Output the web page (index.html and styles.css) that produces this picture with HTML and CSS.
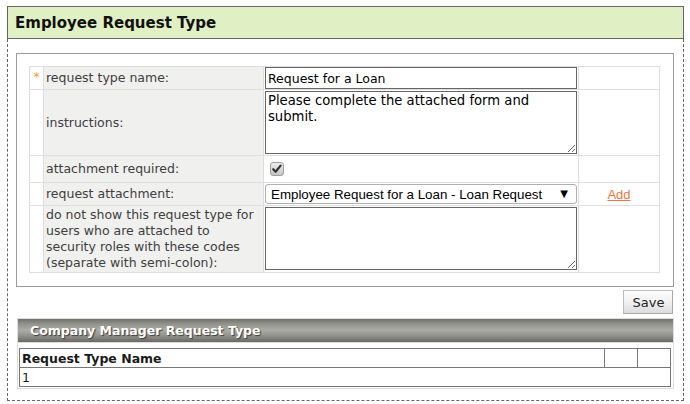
FILE: index.html
```html
<!DOCTYPE html>
<html>
<head>
<meta charset="utf-8">
<link rel="stylesheet" href="styles.css">
</head>
<body>
<div class="page">
  <div class="title">Employee Request Type</div>
  <div class="body">
    <div class="panel">
      <div class="form">
        <div class="c star">*</div>
        <div class="c lbl">request type name:</div>
        <div class="c fld"><input class="txt" type="text" value="Request for a Loan"></div>
        <div class="c"></div>

        <div class="c"></div>
        <div class="c lbl">instructions:</div>
        <div class="c fld"><textarea class="area">Please complete the attached form and submit.</textarea></div>
        <div class="c"></div>

        <div class="c"></div>
        <div class="c lbl">attachment required:</div>
        <div class="c fld mid">
          <svg class="chk" width="14" height="14" viewBox="0 0 14 14">
            <defs>
              <linearGradient id="cg" x1="0" y1="0" x2="0" y2="1">
                <stop offset="0" stop-color="#eeeeee"/>
                <stop offset="1" stop-color="#c4c4c4"/>
              </linearGradient>
            </defs>
            <rect x="0.5" y="0.5" width="13" height="13" rx="2.5" fill="url(#cg)" stroke="#a0a0a0"/>
            <path d="M3.2 7.2 L5.6 9.8 L10.6 3.6" fill="none" stroke="#333" stroke-width="2.2" stroke-linecap="round" stroke-linejoin="round"/>
          </svg>
        </div>
        <div class="c"></div>

        <div class="c"></div>
        <div class="c lbl">request attachment:</div>
        <div class="c fld"><div class="sel"><select class="selbox"><option>Employee Request for a Loan - Loan Request</option></select></div></div>
        <div class="c add"><a href="#" class="link">Add</a></div>

        <div class="c"></div>
        <div class="c lbl">do not show this request type for users who are attached to security roles with these codes (separate with semi-colon):</div>
        <div class="c fld"><textarea class="area area2"></textarea></div>
        <div class="c"></div>
      </div>
    </div>
    <div class="actions"><button class="btn" type="button">Save</button></div>
    <div class="sub">
      <div class="subbar">Company Manager Request Type</div>
      <div class="list">
        <div class="lh">Request Type Name</div>
        <div class="lh"></div>
        <div class="lh"></div>
        <div class="lr">1</div>
      </div>
    </div>
  </div>
</div>
</body>
</html>
```
FILE: styles.css
```css
html, body {
  margin: 0;
  padding: 0;
  background: #fff;
}
body {
  font-family: "DejaVu Sans", Verdana, sans-serif;
  font-size: 12.5px;
  color: #000;
}
.page {
  padding: 6px 6px 0 7px;
}
.title {
  height: 31px;
  border: 1px solid #666;
  background: #e0efc4;
  padding-left: 7px;
  display: flex;
  align-items: center;
  font-weight: bold;
  font-size: 15px;
  color: #111;
}
.body {
  border: 1px dashed #666;
  border-top: none;
  padding: 14px 9px 11px 8px;
}
.panel {
  border: 1px solid #9a9a9a;
  padding: 12px 13px 13px 12px;
}
.form {
  display: grid;
  grid-template-columns: 13px 219px 314px 80px;
  grid-template-rows: 22px 65px 26px 22px 66px;
  gap: 1px;
  padding: 1px;
  background: #dedede;
  width: 631px;
  box-sizing: border-box;
}
.c {
  background: #fff;
}
.star {
  color: #f39a2e;
  text-align: center;
  font-size: 12px;
  line-height: 12px;
  padding-top: 4px;
  box-sizing: border-box;
}
.lbl {
  background: #f0f0ee;
  color: #3e3e3e;
  padding: 0 2px;
  display: flex;
  align-items: center;
  line-height: 16px;
}
.fld {
  padding-left: 1px;
}
.mid {
  display: flex;
  align-items: center;
  padding-left: 6px;
}
.chk {
  display: block;
}
.txt {
  display: block;
  box-sizing: border-box;
  width: 312px;
  height: 22px;
  margin: 0;
  border: 1px solid #666;
  padding: 0 2px;
  font-family: "DejaVu Sans", Verdana, sans-serif;
  font-size: 12.5px;
  color: #000;
  outline: none;
}
.area {
  display: block;
  box-sizing: border-box;
  width: 312px;
  height: 63px;
  margin: 1px 0 0 0;
  border: 1px solid #666;
  padding: 1px 2px;
  font-family: "DejaVu Sans", Verdana, sans-serif;
  font-size: 13.2px;
  line-height: 16px;
  color: #000;
  outline: none;
}
.sel {
  position: relative;
  width: 312px;
  margin-top: 1px;
}
.sel::after {
  content: "\25BC";
  position: absolute;
  right: 9px;
  top: 4px;
  font-family: "DejaVu Sans", sans-serif;
  font-size: 10px;
  line-height: 12px;
  color: #000;
  pointer-events: none;
}
.selbox {
  display: block;
  appearance: none;
  -webkit-appearance: none;
  box-sizing: border-box;
  width: 312px;
  height: 20px;
  margin: 0;
  border: 1px solid #b0b0b0;
  border-radius: 3px;
  background: #fff;
  padding: 0 0 0 5px;
  font-family: "Liberation Sans", Arial, sans-serif;
  font-size: 13.33px;
  color: #000;
  outline: none;
}
.add {
  display: flex;
  align-items: center;
  justify-content: center;
}
.link {
  color: #f4743b;
  font-family: "Liberation Sans", Arial, sans-serif;
  font-size: 13px;
  text-decoration: underline;
}
.actions {
  display: flex;
  justify-content: flex-end;
  margin-top: 3px;
  padding-right: 1px;
}
.btn {
  box-sizing: border-box;
  width: 50px;
  height: 24px;
  margin: 0;
  padding: 0 0 0 1px;
  border: 1px solid #bdbdbd;
  border-right-color: #a9a9a9;
  border-bottom-color: #a9a9a9;
  background: linear-gradient(#fdfdfd, #f2f2f2 45%, #dcdcdc);
  font-family: "DejaVu Sans", Verdana, sans-serif;
  font-size: 13px;
  color: #222;
}
.sub {
  margin: 4px 0 0 1px;
  border: 1px solid #dcdcdc;
}
.subbar {
  height: 23px;
  border-bottom: 1px solid #dcdcdc;
  background: linear-gradient(#72726d, #93938d 22%, #acaca6 48%, #93938d 72%, #6a6a64);
  color: #fff;
  font-weight: bold;
  font-size: 12.5px;
  padding-left: 12px;
  display: flex;
  align-items: center;
  text-shadow: 1px 1px 1px #3a3a3a;
}
.list {
  display: grid;
  grid-template-columns: 584px 32px 32px;
  grid-template-rows: 18px 18px;
  gap: 1px;
  padding: 1px;
  background: #777;
  width: 652px;
  box-sizing: border-box;
  margin: 5px 2px 1px 1px;
}
.lh, .lr {
  background: #fff;
  padding-left: 2px;
  display: flex;
  align-items: center;
  color: #1a1a1a;
}
.lh {
  font-weight: bold;
}
.lr {
  grid-column: 1 / -1;
}
```
